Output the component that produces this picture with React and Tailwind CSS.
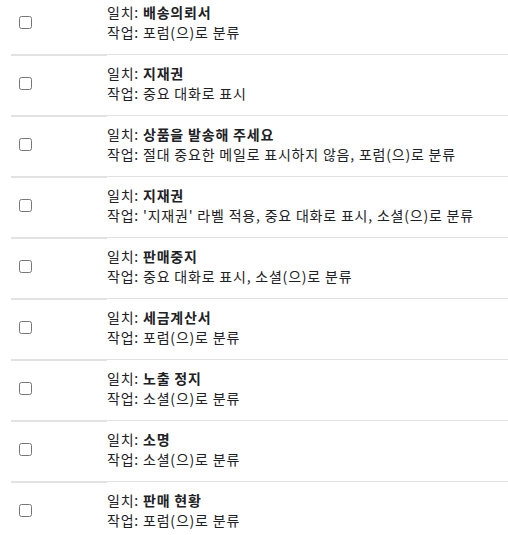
import React from "react";

const rows = [
  ["배송의뢰서", "포럼(으)로 분류"],
  ["지재권", "중요 대화로 표시"],
  ["상품을 발송해 주세요", "절대 중요한 메일로 표시하지 않음, 포럼(으)로 분류"],
  ["지재권", "'지재권' 라벨 적용, 중요 대화로 표시, 소셜(으)로 분류"],
  ["판매중지", "중요 대화로 표시, 소셜(으)로 분류"],
  ["세금계산서", "포럼(으)로 분류"],
  ["노출 정지", "소셜(으)로 분류"],
  ["소명", "소셜(으)로 분류"],
  ["판매 현황", "포럼(으)로 분류"],
];

export default function App() {
  return (
    <div
      className="w-[508px] h-[535px] overflow-hidden bg-white text-[#202124]"
      style={{ fontFamily: '"Noto Sans CJK KR", "Noto Sans", sans-serif' }}
    >
      <div className="mt-[-5px] pl-[11px]">
        {rows.map(([match, action], i) => (
          <div key={i}>
            {i > 0 && (
              <div className="flex items-start">
                <div className="w-[96px] h-[2px] bg-[#e2e2e2]" />
                <div className="flex-1 h-px bg-[#e2e2e2]" />
              </div>
            )}
            <div className="flex h-[59px]">
              <div className="w-[96px] pl-2 pt-[21px]">
                <input
                  type="checkbox"
                  className="block w-[13px] h-[13px] m-0"
                />
              </div>
              <div className="flex-1 pt-[7px] text-[14px] leading-[20px] tracking-[0.8px] whitespace-nowrap">
                <div>
                  일치: <span className="font-bold">{match}</span>
                </div>
                <div>작업: {action}</div>
              </div>
            </div>
          </div>
        ))}
      </div>
    </div>
  );
}
